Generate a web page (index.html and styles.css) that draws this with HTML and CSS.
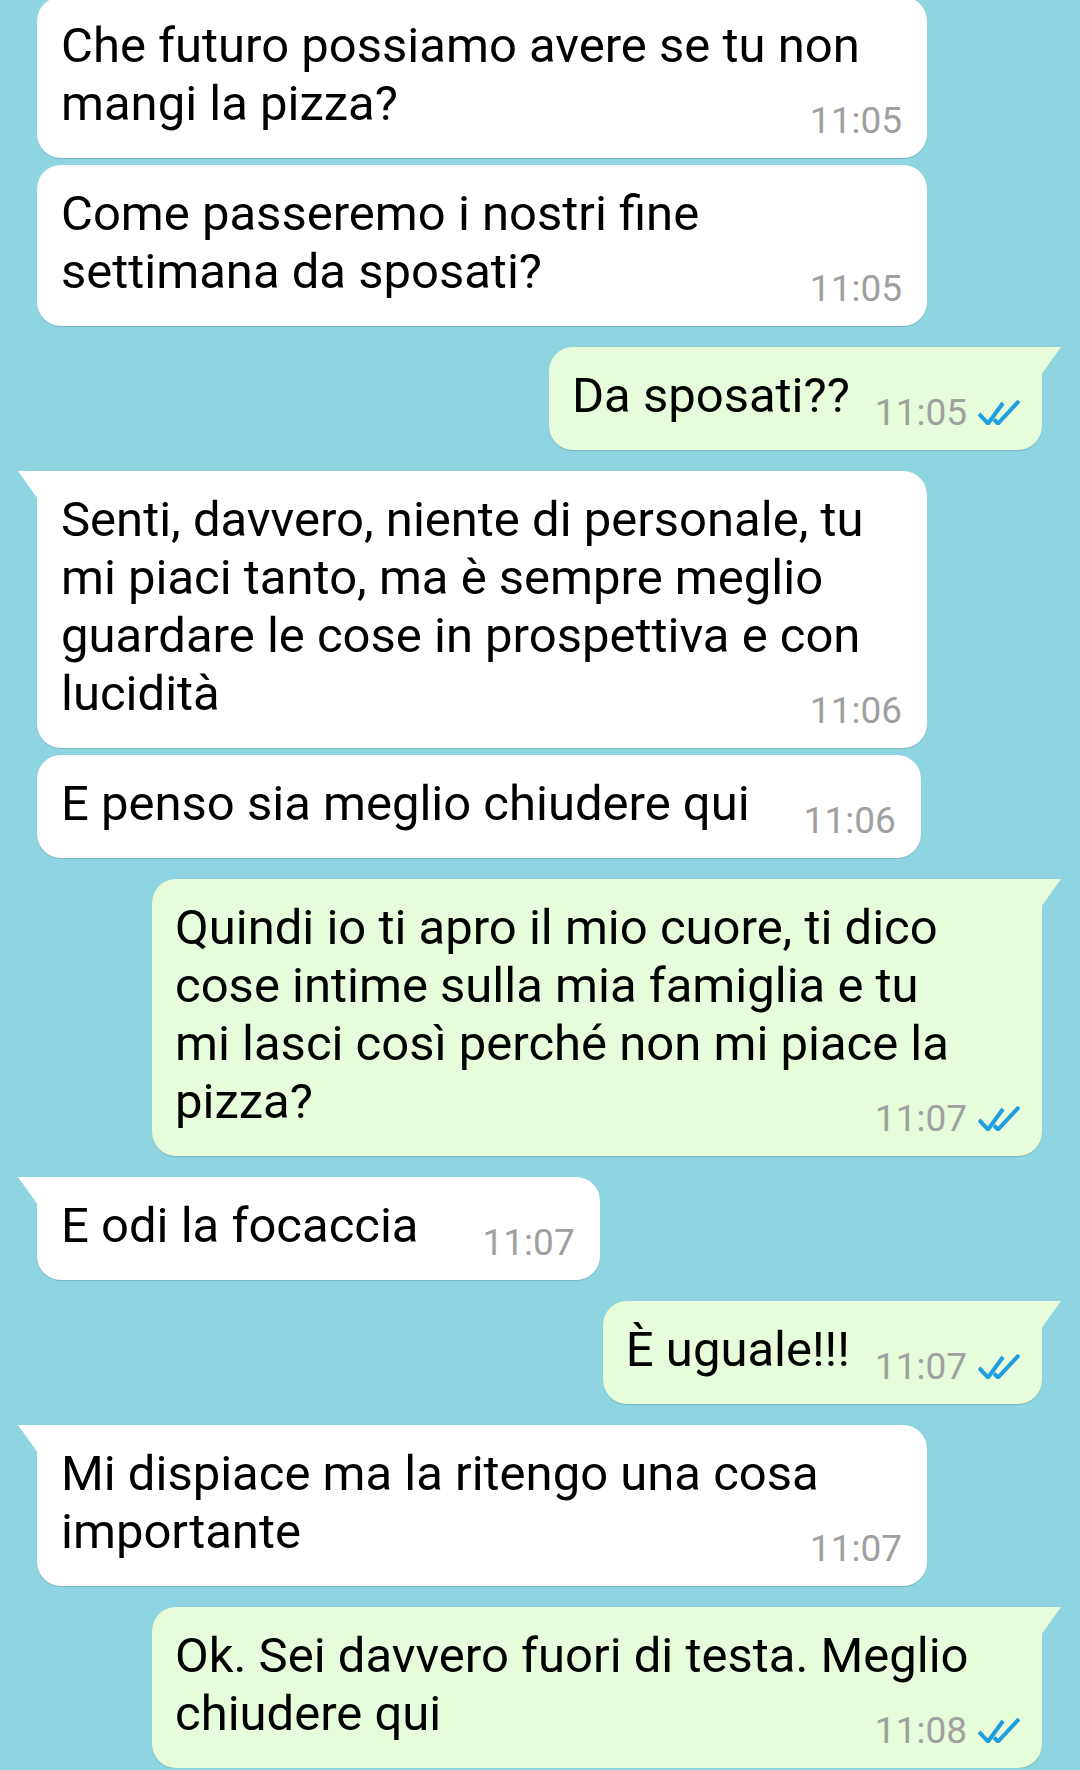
FILE: index.html
```html
<!DOCTYPE html>
<html lang="it">
<head>
    <meta charset="UTF-8">
    <meta name="viewport" content="width=device-width, initial-scale=1.0">
    <title>Chat</title>
    <link rel="stylesheet" href="styles.css">
</head>
<body>
    <main class="chat">
        <div class="msg in">
            <p class="text">Che futuro possiamo avere se tu non mangi la pizza?<span class="meta">11:05</span></p>
        </div>
        <div class="msg in">
            <p class="text">Come passeremo i nostri fine settimana da sposati?<span class="meta">11:05</span></p>
        </div>

        <div class="msg out first">
            <p class="text">Da sposati??<span class="meta">11:05<svg class="ticks" viewBox="0 0 42 25" width="42" height="25"><path d="M1 14 L10 23.5 L25 3 M16 19.5 L20 23.5 L41 1"/></svg></span></p>
        </div>

        <div class="msg in first">
            <p class="text">Senti, davvero, niente di personale, tu mi piaci tanto, ma è sempre meglio guardare le cose in prospettiva e con lucidità<span class="meta">11:06</span></p>
        </div>
        <div class="msg in">
            <p class="text">E penso sia meglio chiudere qui<span class="meta">11:06</span></p>
        </div>

        <div class="msg out first">
            <p class="text">Quindi io ti apro il mio cuore, ti dico cose intime sulla mia famiglia e tu mi lasci così perché non mi piace la pizza?<span class="meta">11:07<svg class="ticks" viewBox="0 0 42 25" width="42" height="25"><path d="M1 14 L10 23.5 L25 3 M16 19.5 L20 23.5 L41 1"/></svg></span></p>
        </div>

        <div class="msg in first">
            <p class="text">E odi la focaccia<span class="meta wide">11:07</span></p>
        </div>

        <div class="msg out first">
            <p class="text">È uguale!!!<span class="meta">11:07<svg class="ticks" viewBox="0 0 42 25" width="42" height="25"><path d="M1 14 L10 23.5 L25 3 M16 19.5 L20 23.5 L41 1"/></svg></span></p>
        </div>

        <div class="msg in first">
            <p class="text">Mi dispiace ma la ritengo una cosa importante<span class="meta">11:07</span></p>
        </div>

        <div class="msg out first">
            <p class="text">Ok. Sei davvero fuori di testa. Meglio chiudere qui<span class="meta">11:08<svg class="ticks" viewBox="0 0 42 25" width="42" height="25"><path d="M1 14 L10 23.5 L25 3 M16 19.5 L20 23.5 L41 1"/></svg></span></p>
        </div>
    </main>
</body>
</html>
```

FILE: styles.css
```css
body {
    margin: 0;
    background-color: #8fd5e1;
    font-family: Roboto, "Noto Sans", sans-serif;
    overflow: hidden;
}

.chat {
    display: flex;
    flex-direction: column;
    margin-top: -3px;
    padding: 0 38px 0 37px;
}

.msg {
    position: relative;
    max-width: 890px;
    box-sizing: border-box;
    padding: 20px 25px 22px 24px;
    border-radius: 24px;
    background-color: #fff;
    box-shadow: 0 1px 1px rgba(0, 0, 0, 0.15);
    align-self: flex-start;
    display: flow-root;
}

.msg + .msg {
    margin-top: 7px;
}

.msg.first {
    margin-top: 21px;
}

.msg.out {
    align-self: flex-end;
    background-color: #e6fcda;
    padding: 20px 22px 22px 23px;
}

/* little tail on the first bubble of a group */
.msg.in.first {
    border-top-left-radius: 0;
}

.msg.out.first {
    border-top-right-radius: 0;
}

.msg.first::before {
    content: '';
    position: absolute;
    top: 0;
    width: 20px;
    height: 28px;
    background-color: inherit;
}

.msg.in.first::before {
    left: -19px;
    clip-path: polygon(0 0, 100% 0, 100% 100%);
}

.msg.out.first::before {
    right: -19px;
    clip-path: polygon(0 0, 100% 0, 0 100%);
}

/* text wraps a bit before the bubble edge, the time may sit in that gap */
.text {
    margin: 0 38px 0 0;
    font-size: 49px;
    line-height: 58px;
    color: #000;
}

.out .text {
    margin-right: 40px;
}

.meta {
    float: right;
    margin: 31px -38px 0 54px;
    font-size: 37px;
    line-height: 30px;
    color: #a0a0a0;
    white-space: nowrap;
}

.meta.wide {
    margin-left: 64px;
}

.out .meta {
    margin-left: 25px;
    margin-right: -40px;
}

.ticks {
    margin-left: 11px;
    vertical-align: baseline;
    fill: none;
    stroke: #1f9fe0;
    stroke-width: 4;
}
```
